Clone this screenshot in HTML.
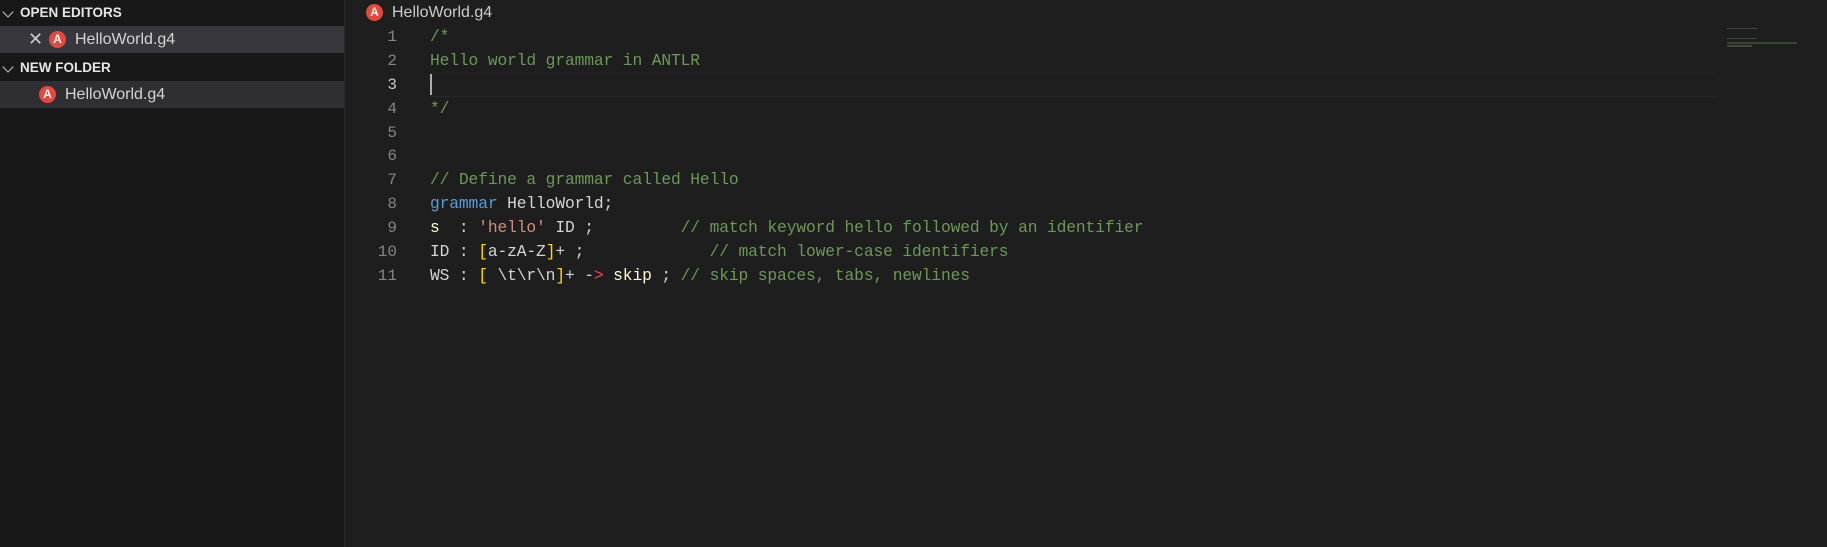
<!DOCTYPE html>
<html><head><meta charset="utf-8"><style>
body{margin:0;width:1827px;height:547px;background:#1e1e1e;overflow:hidden;font-family:"Liberation Sans",sans-serif;position:relative}
#side{position:absolute;left:0;top:0;width:344px;height:547px;background:#181818;border-right:1px solid #2b2b2b}
.hdr{position:absolute;left:0;width:344px;height:25px;color:#e6e6e6;font-weight:bold;font-size:13.5px;line-height:25px}
.row{position:absolute;left:0;width:344px;height:27px;color:#d4d4d4;font-size:16px;line-height:27px}
.ic{position:absolute;width:17px;height:17px;border-radius:50%;background:#e8483b;color:#fff;font-size:12px;font-weight:bold;text-align:center;line-height:17px}
.chev{position:absolute;left:4px;top:8px;width:7px;height:7px;border-left:1.5px solid #ccc;border-bottom:1.5px solid #ccc;transform:rotate(-45deg)}
.l{position:absolute;height:24px;line-height:24px;white-space:pre;color:#d4d4d4}
.n{position:absolute;width:397px;text-align:right;height:24px;line-height:24px;color:#858585;font-family:"Liberation Mono",monospace;font-size:16px}
.c{color:#6a9955}.k{color:#569cd6}.s{color:#ce9178}.y{color:#ffd700}.r{color:#f44747}.w{color:#fffbd0}
</style></head><body>
<div id="side">
 <div class="hdr" style="top:0"><span class="chev"></span><span style="position:absolute;left:20px">OPEN EDITORS</span></div>
 <div class="row" style="top:26px;background:#37373d"><span style="position:absolute;left:28px;color:#ccc;font-size:18px">✕</span><span class="ic" style="left:49px;top:5px">A</span><span style="position:absolute;left:75px">HelloWorld.g4</span></div>
 <div class="hdr" style="top:55px"><span class="chev"></span><span style="position:absolute;left:20px">NEW FOLDER</span></div>
 <div class="row" style="top:81px;background:#2f2f33"><span class="ic" style="left:39px;top:5px">A</span><span style="position:absolute;left:65px">HelloWorld.g4</span></div>
</div>
<span class="ic" style="left:366px;top:4px">A</span>
<div style="position:absolute;left:392px;top:3px;color:#ccc;font-size:16px;line-height:20px">HelloWorld.g4</div>
<div style="position:absolute;left:430px;top:73px;width:1287px;height:22px;border-top:1px solid #282828;border-bottom:1px solid #282828"></div>
<div style="position:absolute;left:430px;top:74px;width:2px;height:21px;background:#aeafad"></div>
<div class="n" style="top:25px">1</div><div class="n" style="top:49px">2</div><div class="n" style="top:73px;color:#c6c6c6">3</div><div class="n" style="top:97px">4</div><div class="n" style="top:121px">5</div><div class="n" style="top:144px">6</div><div class="n" style="top:168px">7</div><div class="n" style="top:192px">8</div><div class="n" style="top:216px">9</div><div class="n" style="top:240px">10</div><div class="n" style="top:264px">11</div>
<div style="position:absolute;left:430px;top:0;font-family:'Liberation Mono',monospace;font-size:16.3px;letter-spacing:-0.13px">
<div class="l c" style="top:25px">/*</div>
<div class="l c" style="top:49px">Hello world grammar in ANTLR</div>
<div class="l c" style="top:97px">*/</div>
<div class="l c" style="top:168px">// Define a grammar called Hello</div>
<div class="l" style="top:192px"><span class="k">grammar</span> HelloWorld;</div>
<div class="l" style="top:216px"><span class="w">s</span>  : <span class="s">'hello'</span> ID ;         <span class="c">// match keyword hello followed by an identifier</span></div>
<div class="l" style="top:240px">ID : <span class="y">[</span>a-zA-Z<span class="y">]</span>+ ;             <span class="c">// match lower-case identifiers</span></div>
<div class="l" style="top:264px">WS : <span class="y">[</span> \t\r\n<span class="y">]</span>+ -<span class="r">&gt;</span> <span class="w">skip</span> ; <span class="c">// skip spaces, tabs, newlines</span></div>
</div>
<div style="position:absolute;left:1727px;top:28px;width:30px;height:1px;background:#3a4a35"></div>
<div style="position:absolute;left:1727px;top:38px;width:30px;height:1px;background:#3a4a35"></div>
<div style="position:absolute;left:1727px;top:42px;width:70px;height:2px;background:#344a30"></div>
<div style="position:absolute;left:1727px;top:45px;width:25px;height:2px;background:#4a4440"></div>
</body></html>
